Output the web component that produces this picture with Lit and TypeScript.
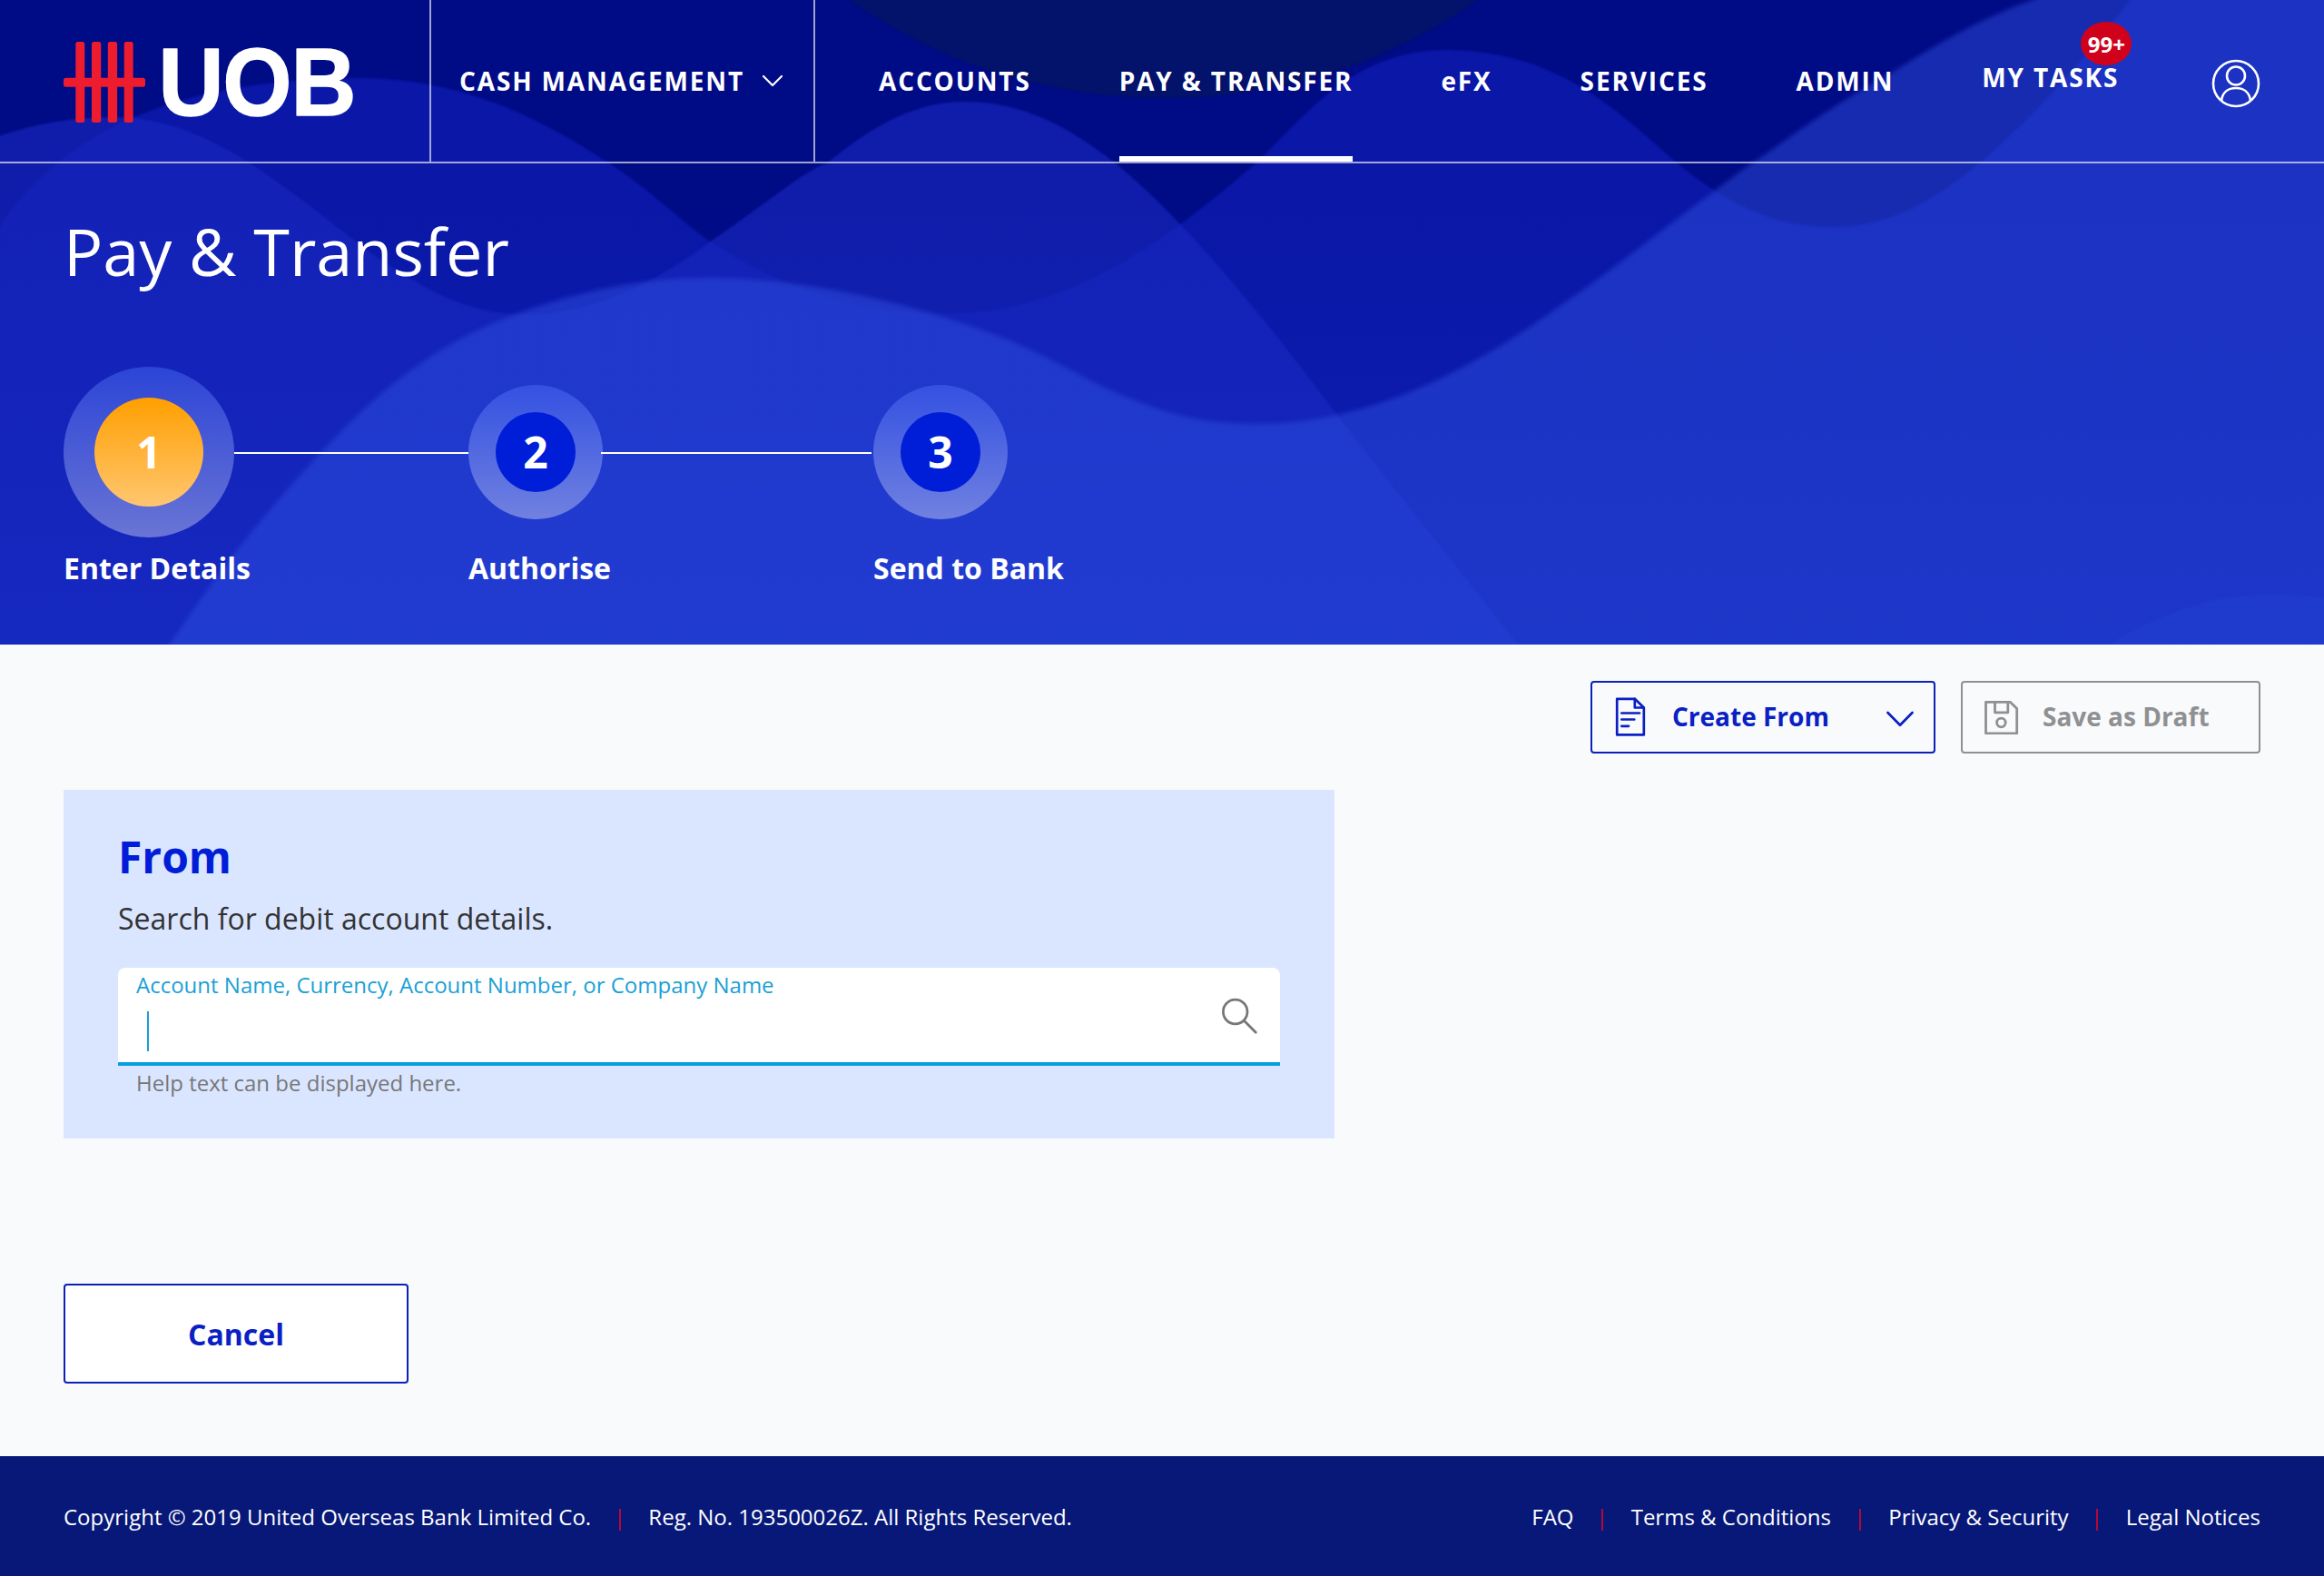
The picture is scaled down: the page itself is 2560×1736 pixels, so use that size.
import { LitElement, html, css, svg } from "lit";
import { customElement } from "lit/decorators.js";
import { classMap } from "lit/directives/class-map.js";

const NAV = [
  { label: "ACCOUNTS" },
  { label: "PAY & TRANSFER", active: true },
  { label: "eFX" },
  { label: "SERVICES" },
  { label: "ADMIN" },
  { label: "MY TASKS", badge: "99+" },
];

const STEPS = [
  { n: 1, label: "Enter Details", current: true },
  { n: 2, label: "Authorise" },
  { n: 3, label: "Send to Bank" },
];

const LINKS = ["FAQ", "Terms & Conditions", "Privacy & Security", "Legal Notices"];

@customElement("hero-waves")
class HeroWaves extends LitElement {
  static styles = css`
    :host {
      display: block;
      position: absolute;
      inset: 0;
      z-index: 0;
      overflow: hidden;
    }
    svg {
      display: block;
    }
  `;
  render() {
    return html`<svg width="2560" height="710" viewBox="0 0 2560 710">
      ${svg`
      <defs>
        <linearGradient id="tint" x1="0" y1="0" x2="0" y2="1">
          <stop offset="0.3" stop-color="#2458ff" stop-opacity="0"/>
          <stop offset="1" stop-color="#2458ff" stop-opacity="0.13"/>
        </linearGradient>
        <filter id="soft" x="-5%" y="-5%" width="110%" height="110%" color-interpolation-filters="sRGB"><feGaussianBlur stdDeviation="2.6"/></filter>
        <filter id="edge" x="-5%" y="-5%" width="110%" height="110%" color-interpolation-filters="sRGB"><feGaussianBlur stdDeviation="0.8"/></filter>
      </defs>
      <rect width="2560" height="710" fill="#000b86"/>
      <path d="M930 -4C1040 75 1160 108 1285 108C1410 108 1530 70 1634 -4Z" fill="#03126a" filter="url(#edge)"/>
      <path d="M-10 270C0 245 20 215 63 180C100 150 190 86 396 86C520 86 610 140 672 180C720 212 760 252 781 265C850 310 930 345 1045 345C1180 345 1290 260 1383 180C1440 125 1490 55 1594 55C1720 55 1790 130 1848 180C1900 222 1950 250 2018 250C2090 250 2140 212 2180 180C2250 120 2290 70 2350 -4L2570 -4V720H-10Z" fill="#0a17a7" filter="url(#edge)"/>
      <path d="M-10 153C30 138 75 129 126 129C190 129 240 158 276 180C340 222 400 275 430 293C480 325 520 346 580 346C660 346 730 305 784 265C850 220 890 185 911 180C950 148 1000 112 1062 112C1130 112 1180 142 1229 180C1260 206 1280 226 1300 247C1370 320 1430 400 1475 460C1560 570 1630 655 1680 720H-10Z" fill="#1827be" fill-opacity="0.67" filter="url(#edge)"/>
      <path d="M180 720C220 660 260 600 352 500C400 450 420 430 474 393C520 362 640 306 780 306C900 306 1030 342 1107 373C1160 394 1200 422 1240 437C1290 458 1330 467 1385 467C1500 467 1610 415 1714 340C1780 295 1840 245 1889 210C1925 182 1935 177 1963 157C2000 130 2050 98 2084 80C2140 45 2180 20 2260 -8L2570 -8V720Z" fill="#3150e0" fill-opacity="0.48" filter="url(#soft)"/>
      <path d="M2320 712C2390 668 2450 655 2500 655C2530 655 2550 657 2570 660V712Z" fill="#2a4ce0" fill-opacity="0.18" filter="url(#edge)"/>
      <rect width="2560" height="710" fill="url(#tint)"/>`}
    </svg>`;
  }
}

@customElement("app-root")
class AppRoot extends LitElement {
  static styles = css`
    :host {
      display: flex;
      flex-direction: column;
      width: 2560px;
      height: 1736px;
      background: #f9fafc;
      font-family: "Open Sans", "Noto Sans", sans-serif;
      color: #fff;
    }
    * {
      box-sizing: border-box;
    }
    svg {
      display: block;
      flex: none;
    }
    .hero {
      position: relative;
      height: 710px;
      flex: none;
    }
    .hero-content {
      position: relative;
      z-index: 1;
    }
    .topbar {
      display: flex;
      height: 180px;
      border-bottom: 2px solid rgba(255, 255, 255, 0.62);
      font-size: 28px;
      font-weight: 700;
      letter-spacing: 1.86px;
      white-space: nowrap;
    }
    .brand {
      width: 475px;
      padding: 10px 0 0 70px;
      border-right: 2px solid rgba(255, 255, 255, 0.62);
    }
    .wordmark {
      font-family: "Liberation Sans", sans-serif;
      font-size: 106px;
      font-weight: 700;
      letter-spacing: 0;
    }
    .product {
      width: 423px;
      padding-left: 31px;
      display: flex;
      align-items: center;
      gap: 19px;
      border-right: 2px solid rgba(255, 255, 255, 0.62);
    }
    .nav {
      display: flex;
      flex: 1;
      gap: 97px;
      padding: 0 70px;
    }
    .item {
      position: relative;
      display: flex;
      align-items: center;
      padding-top: 6px;
      border-bottom: 6px solid transparent;
    }
    .item.active {
      border-bottom-color: #fff;
    }
    .item.tasks {
      padding-bottom: 8px;
    }
    .badge {
      position: absolute;
      top: 24px;
      right: -14px;
      width: 56px;
      height: 48px;
      border-radius: 28px / 24px;
      background: #d0021b;
      font-size: 24px;
      line-height: 49px;
      letter-spacing: 0;
      text-align: center;
    }
    .user {
      align-self: center;
      margin: 6px 0 0 auto;
    }
    .title {
      margin: 46px 0 0 70px;
      font-size: 72px;
      line-height: 100px;
      font-weight: 400;
    }
    .steps {
      display: grid;
      grid-template-columns: 446px 446px 300px;
      margin: 78px 0 0 70px;
    }
    .track {
      display: flex;
      align-items: center;
      height: 188px;
    }
    .ring {
      display: grid;
      place-items: center;
      flex: none;
      width: 148px;
      height: 148px;
      border-radius: 50%;
      background: linear-gradient(rgba(78, 114, 255, 0.42), rgba(255, 255, 255, 0.36));
    }
    .dot {
      width: 88px;
      height: 88px;
      border-radius: 50%;
      background: #001ed8;
      font-size: 48px;
      line-height: 88px;
      font-weight: 700;
      text-align: center;
    }
    .current .ring {
      width: 188px;
      height: 188px;
    }
    .current .dot {
      width: 120px;
      height: 120px;
      line-height: 120px;
      background: linear-gradient(#ff9f00, #ffc670);
    }
    .line {
      flex: 1;
      height: 2px;
      margin: 2px 2px 0 -2px;
      background: #fff;
    }
    .current .line {
      margin: 2px 0 0;
    }
    .step-label {
      margin-top: 12px;
      font-size: 32px;
      line-height: 44px;
      font-weight: 700;
    }
    .main {
      flex: 1;
      padding: 40px 70px 0;
    }
    .actions {
      display: flex;
      justify-content: flex-end;
      gap: 28px;
    }
    .btn {
      display: flex;
      align-items: center;
      height: 80px;
      border: 2px solid #0a22b8;
      border-radius: 4px;
      background: transparent;
      color: #0a1fc4;
      font: 700 28px "Open Sans", sans-serif;
      padding: 0 0 0 24px;
    }
    .create {
      width: 380px;
    }
    .create .caret-down {
      margin: 3px 22px 0 auto;
    }
    .draft {
      width: 330px;
      border-color: #8f9092;
      color: #8f9092;
    }
    .btn-text {
      margin-left: 26px;
      padding-bottom: 2px;
      white-space: nowrap;
    }
    .card {
      width: 1400px;
      height: 384px;
      margin-top: 40px;
      padding: 41px 60px 0;
      background: #dae6ff;
    }
    .card-title {
      margin: 0;
      font-size: 48px;
      line-height: 66px;
      font-weight: 700;
      color: #001ed8;
    }
    .card-text {
      margin: 13px 0 32px;
      font-size: 32px;
      line-height: 44px;
      color: #333;
    }
    .field {
      display: flex;
      justify-content: space-between;
      height: 108px;
      padding: 0 24px 0 20px;
      border-radius: 8px 8px 0 0;
      border-bottom: 4px solid #06a0df;
      background: #fff;
    }
    .field-label {
      margin-top: 3px;
      font-size: 24px;
      line-height: 32px;
      color: #1b9fd4;
    }
    .cursor {
      width: 2px;
      height: 44px;
      margin: 13px 0 0 12px;
      background: #1b9fd4;
    }
    .search {
      margin-top: 33px;
    }
    .help {
      margin: 3px 0 0 20px;
      font-size: 24px;
      line-height: 32px;
      color: #777;
    }
    .cancel {
      width: 380px;
      height: 110px;
      margin-top: 160px;
      padding: 0;
      justify-content: center;
      background: #fff;
      font-size: 32px;
    }
    .footer {
      display: flex;
      justify-content: space-between;
      align-items: center;
      flex: none;
      height: 132px;
      padding: 2px 70px 0;
      background: #071879;
      font-size: 24px;
      line-height: 34px;
      white-space: nowrap;
    }
    .group {
      display: flex;
      align-items: center;
    }
    .sep {
      width: 2px;
      height: 24px;
      margin: 5px 30.6px 0;
      background: #b20a38;
    }
  `;

  private logo() {
    return html`<svg width="340" height="150" viewBox="70 10 340 150">
      <g fill="#ed1c2e">
        <rect x="83.3" y="46" width="10" height="89" rx="2.5" />
        <rect x="101" y="46" width="10.3" height="89" rx="2.5" />
        <rect x="118.8" y="46" width="10.3" height="89" rx="2.5" />
        <rect x="136.7" y="46" width="10" height="89" rx="2.5" />
        <rect x="70" y="85.7" width="90" height="10" rx="2.5" />
      </g>
      <g class="wordmark" fill="#fff" stroke="#fff" stroke-width="1.5" stroke-linejoin="round">
        <text transform="translate(174.5 127) scale(0.94 1)">U</text>
        <text transform="translate(245.5 127) scale(0.92 1)">O</text>
        <text transform="translate(320.5 127) scale(0.94 1)">B</text>
      </g>
    </svg>`;
  }

  render() {
    return html`
      <header class="hero">
        <hero-waves></hero-waves>
        <div class="hero-content">
          <div class="topbar">
            <div class="brand">${this.logo()}</div>
            <div class="product">
              <span>CASH MANAGEMENT</span>
              <svg width="24" height="14" viewBox="0 0 24 14" fill="none" stroke="#fff" stroke-width="2.2" stroke-linecap="round" stroke-linejoin="round">
                <path d="M2 2L12 12L22 2" />
              </svg>
            </div>
            <nav class="nav">
              ${NAV.map(
                (i) => html`<div class=${classMap({ item: true, active: !!i.active, tasks: !!i.badge })}>
                  ${i.label}${i.badge ? html`<span class="badge">${i.badge}</span>` : ""}
                </div>`
              )}
              <svg class="user" width="54" height="54" viewBox="0 0 54 54" fill="none" stroke="#fff" stroke-width="2.6">
                <circle cx="27" cy="27" r="25" />
                <circle cx="27" cy="18.5" r="10" />
                <path d="M11 46C12 37 18 32 27 32S42 37 43 46" />
              </svg>
            </nav>
          </div>
          <h1 class="title">Pay &amp; Transfer</h1>
          <div class="steps">
            ${STEPS.map(
              (s, i) => html`<div class=${classMap({ step: true, current: !!s.current })}>
                <div class="track">
                  <div class="ring"><div class="dot">${s.n}</div></div>
                  ${i < STEPS.length - 1 ? html`<div class="line"></div>` : ""}
                </div>
                <div class="step-label">${s.label}</div>
              </div>`
            )}
          </div>
        </div>
      </header>
      <main class="main">
        <div class="actions">
          <button class="btn create">
            <svg width="38" height="44" viewBox="0 0 38 44" fill="none" stroke="currentColor" stroke-width="2.7" stroke-linejoin="round" stroke-linecap="round">
              <path d="M3.2 1.8H22.8L32.8 11.5V41.4H3.2Z" />
              <path d="M22.8 1.8V11.5H32.4M8.3 17.5H28M8.3 24.5H22.3M8.3 31.8H16" />
            </svg>
            <span class="btn-text">Create From</span>
            <svg class="caret-down" width="30" height="18" viewBox="0 0 30 18" fill="none" stroke="currentColor" stroke-width="2.7" stroke-linecap="round" stroke-linejoin="round">
              <path d="M1.5 2L15 15.7L28.5 2" />
            </svg>
          </button>
          <button class="btn draft">
            <svg width="38" height="38" viewBox="0 0 38 38" fill="none" stroke="currentColor" stroke-width="2.8" stroke-linejoin="round">
              <path d="M1.5 2.4H28.5L35.7 9.6V36.8H1.5Z" />
              <path d="M11.5 2.5V13.8H25.8V2.5" />
              <circle cx="18.4" cy="25" r="4.8" />
            </svg>
            <span class="btn-text">Save as Draft</span>
          </button>
        </div>
        <section class="card">
          <h2 class="card-title">From</h2>
          <p class="card-text">Search for debit account details.</p>
          <div class="field">
            <div>
              <div class="field-label">Account Name, Currency, Account Number, or Company Name</div>
              <div class="cursor"></div>
            </div>
            <svg class="search" width="42" height="42" viewBox="0 0 42 42" fill="none" stroke="#777" stroke-width="2.8" stroke-linecap="round">
              <circle cx="16.7" cy="15.5" r="13.3" />
              <path d="M26.3 25.2L39.3 38.2" />
            </svg>
          </div>
          <div class="help">Help text can be displayed here.</div>
        </section>
        <button class="btn cancel">Cancel</button>
      </main>
      <footer class="footer">
        <div class="group">
          <span>Copyright © 2019 United Overseas Bank Limited Co.</span>
          <span class="sep"></span>
          <span>Reg. No. 193500026Z. All Rights Reserved.</span>
        </div>
        <div class="group">
          ${LINKS.map((l, i) => html`${i ? html`<span class="sep"></span>` : ""}<span>${l}</span>`)}
        </div>
      </footer>
    `;
  }
}
